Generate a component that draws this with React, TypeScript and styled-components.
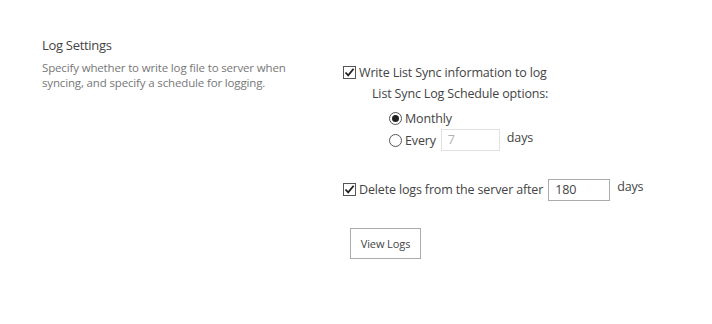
import styled, { createGlobalStyle } from "styled-components";

const GlobalStyle = createGlobalStyle`
  body {
    margin: 0;
    background: #fff;
    font-family: "Open Sans", "Noto Sans", sans-serif;
    color: #444;
  }
`;

function CheckBox({ checked }: { checked: boolean }) {
  return (
    <Box>
      {checked && (
        <svg width="11" height="11" viewBox="0 0 11 11">
          <path d="M1.5 5.5 L4.2 8.4 L9.6 1.8" fill="none" stroke="#222" strokeWidth="1.8" />
        </svg>
      )}
    </Box>
  );
}

function App() {
  return (
    <>
      <GlobalStyle />
      <Page>
        <Section>
          <Header>
            <Title>Log Settings</Title>
            <Description>
              Specify whether to write log file to server when syncing, and
              specify a schedule for logging.
            </Description>
          </Header>
          <Controls>
            <CheckRow>
              <CheckBox checked />
              <span>Write List Sync information to log</span>
            </CheckRow>
            <Schedule>
              <ScheduleLabel>List Sync Log Schedule options:</ScheduleLabel>
              <RadioList>
                <RadioRow>
                  <Radio checked />
                  <span>Monthly</span>
                </RadioRow>
                <RadioRow>
                  <Radio />
                  <span>Every</span>
                  <TextBox width={59} disabled>7</TextBox>
                  <Unit>days</Unit>
                </RadioRow>
              </RadioList>
            </Schedule>
            <DeleteRow>
              <CheckBox checked />
              <span>Delete logs from the server after</span>
              <TextBox width={62}>180</TextBox>
              <Unit>days</Unit>
            </DeleteRow>
            <Button>View Logs</Button>
          </Controls>
        </Section>
      </Page>
    </>
  );
}

export default App;

const Page = styled.div`
  padding: 36px 0 0 42px;
`;

const Section = styled.div`
  display: grid;
  grid-template-columns: 301px 1fr;
`;

const Header = styled.div`
  display: flex;
  flex-direction: column;
`;

const Title = styled.div`
  font-size: 13px;
  letter-spacing: -0.3px;
  line-height: 18px;
  color: #444;
`;

const Description = styled.p`
  margin: 6px 0 0;
  font-size: 11.5px;
  letter-spacing: -0.15px;
  line-height: 15px;
  color: #777;
  width: 250px;
`;

const Controls = styled.div`
  display: flex;
  flex-direction: column;
  align-items: flex-start;
  padding-top: 26px;
  font-size: 12.5px;
  letter-spacing: -0.15px;
  color: #444;
`;

const CheckRow = styled.label`
  display: flex;
  align-items: center;
  gap: 3px;
  height: 20px;
`;

const Box = styled.span`
  width: 11px;
  height: 11px;
  border: 1px solid #555;
  display: inline-flex;
  align-items: center;
  justify-content: center;
  background: #fff;
`;

const Schedule = styled.div`
  padding-left: 29px;
  margin-top: 2px;
`;

const ScheduleLabel = styled.div`
  height: 20px;
  line-height: 20px;
`;

const RadioList = styled.div`
  display: flex;
  flex-direction: column;
  padding-left: 17px;
  margin-top: 4px;
`;

const RadioRow = styled.label`
  display: flex;
  align-items: center;
  gap: 3px;
  min-height: 21px;
`;

const Radio = styled.span<{ checked?: boolean }>`
  width: 11px;
  height: 11px;
  border: 1px solid #555;
  border-radius: 50%;
  display: inline-flex;
  align-items: center;
  justify-content: center;
  &::after {
    content: "";
    width: 7px;
    height: 7px;
    border-radius: 50%;
    background: ${(p) => (p.checked ? "#222" : "transparent")};
  }
`;

const TextBox = styled.span<{ width: number; disabled?: boolean }>`
  box-sizing: border-box;
  width: ${(p) => p.width}px;
  height: 22px;
  border: 1px solid ${(p) => (p.disabled ? "#e1e1e1" : "#ababab")};
  padding: 0 6px;
  line-height: 20px;
  color: ${(p) => (p.disabled ? "#b1b1b1" : "#444")};
  margin-left: 2px;
`;

const Unit = styled.span`
  margin-left: 4px;
  align-self: flex-start;
`;

const DeleteRow = styled(CheckRow)`
  height: 23px;
  margin-top: 27px;
`;

const Button = styled.button`
  margin: 27px 0 0 7px;
  width: 71px;
  height: 31px;
  border: 1px solid #ababab;
  background: #fff;
  font-family: inherit;
  font-size: 11px;
  letter-spacing: -0.1px;
  color: #444;
  padding: 0;
`;
